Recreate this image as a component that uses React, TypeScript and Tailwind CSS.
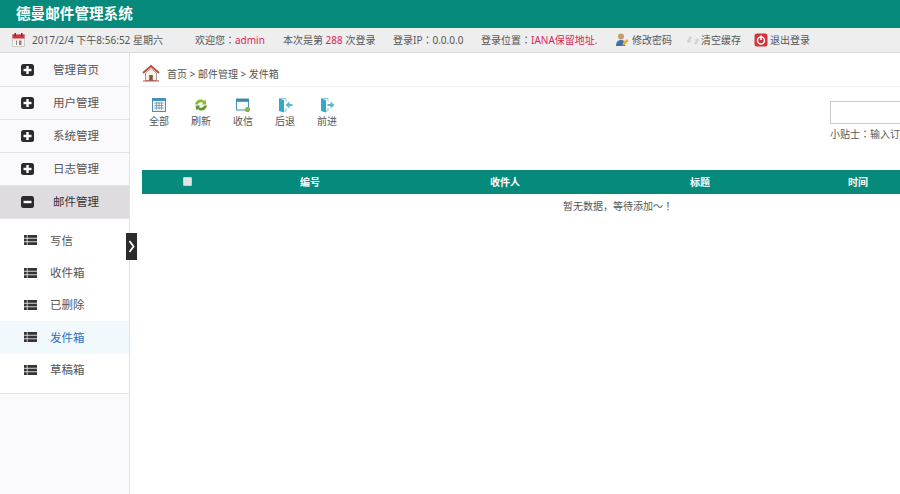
const FONT = "font-['Noto_Sans','Noto_Sans_CJK_SC',sans-serif]";
const CENTERED = "font-['Noto_Sans_CJK_TC',sans-serif]";

const MENU = [
  { label: "管理首页", open: false },
  { label: "用户管理", open: false },
  { label: "系统管理", open: false },
  { label: "日志管理", open: false },
  { label: "邮件管理", open: true },
];

const SUB_MENU = ["写信", "收件箱", "已删除", "发件箱", "草稿箱"];

const COLUMNS = ["编号", "收件人", "标题", "时间"];

// full-width colon sits mid-cell in the reference, TC glyph does that
function Colon() {
  return <span className={CENTERED}>：</span>;
}

function CalendarIcon() {
  return (
    <svg width="13" height="14" viewBox="0 0 13 14" className="shrink-0">
      <rect x="0.5" y="1.5" width="12" height="12" fill="#f4f1ee" stroke="#b9b4b0" strokeWidth="0.6" />
      <rect x="0.5" y="1.5" width="12" height="4" fill="#d2333f" />
      <rect x="2.5" y="0" width="1.5" height="3" fill="#7a2530" />
      <rect x="9" y="0" width="1.5" height="3" fill="#7a2530" />
      <rect x="4" y="7.5" width="1" height="4.5" fill="#8b8682" />
      <rect x="7" y="7.5" width="2.5" height="4.5" fill="#8b8682" />
    </svg>
  );
}

function UserIcon() {
  return (
    <svg width="14" height="14" viewBox="0 0 14 14" className="shrink-0">
      <circle cx="6" cy="3.5" r="3" fill="#c99a6a" />
      <path d="M1 13c0-4 2-6 5-6s4 1.5 4 3v3z" fill="#3f6fb0" />
      <path d="M8 9l4-3 1.5 2-4 4-2 .5z" fill="#e8b030" />
    </svg>
  );
}

function GrayRefreshIcon() {
  return (
    <svg width="14" height="13" viewBox="0 0 14 13" className="shrink-0">
      <path d="M1 7l3-5 2 1.5-2 3 1.5 1L1.5 9z" fill="#d2d2d2" />
      <path d="M13 6l-3 5-2-1.5 2-3-1.5-1L12.5 4z" fill="#d2d2d2" />
    </svg>
  );
}

function PowerIcon() {
  return (
    <svg width="14" height="14" viewBox="0 0 14 14" className="shrink-0">
      <rect x="0.5" y="0.5" width="13" height="13" rx="2.5" fill="#d5333a" />
      <circle cx="7" cy="7.5" r="3.5" fill="none" stroke="#fff" strokeWidth="1.5" />
      <rect x="6.2" y="2.5" width="1.6" height="4.5" fill="#fff" />
    </svg>
  );
}

function ToggleIcon({ open }: { open: boolean }) {
  return (
    <svg width="13" height="12" viewBox="0 0 13 12" className="shrink-0">
      <rect width="13" height="12" rx="2.5" fill="#2b2b2b" />
      <rect x="2.5" y="4.8" width="8" height="2.4" fill="#fff" />
      {!open && <rect x="5.3" y="2" width="2.4" height="8" fill="#fff" />}
    </svg>
  );
}

function ListIcon() {
  return (
    <svg width="13" height="10" viewBox="0 0 13 10" className="shrink-0">
      <rect x="0" y="0" width="2.8" height="2.8" fill="#333" />
      <rect x="3.5" y="0" width="9.5" height="2.8" fill="#333" />
      <rect x="0" y="3.6" width="2.8" height="2.8" fill="#333" />
      <rect x="3.5" y="3.6" width="9.5" height="2.8" fill="#333" />
      <rect x="0" y="7.2" width="2.8" height="2.8" fill="#333" />
      <rect x="3.5" y="7.2" width="9.5" height="2.8" fill="#333" />
    </svg>
  );
}

function HomeIcon() {
  return (
    <svg width="18" height="18" viewBox="0 0 18 18" className="shrink-0">
      <path d="M1 9L9 2l8 7" fill="none" stroke="#c0473a" strokeWidth="1.8" />
      <path d="M3.5 9v7.5h11V9L9 4.5z" fill="#f7f1e6" stroke="#8d8a80" strokeWidth="0.8" />
      <rect x="7.2" y="11" width="3.6" height="5.5" fill="#7d5a4a" />
      <rect x="1" y="16.5" width="16" height="1" fill="#c0473a" />
    </svg>
  );
}

function GridIcon() {
  return (
    <svg width="14" height="14" viewBox="0 0 14 14">
      <rect x="0.5" y="0.5" width="13" height="13" fill="#eef5fa" stroke="#4a8fb5" />
      <rect x="0.5" y="0.5" width="13" height="2.5" fill="#4a8fb5" />
      <path d="M2.5 5h9M2.5 7.5h9M2.5 10h9M4.5 4v7.5M7 4v7.5M9.5 4v7.5" stroke="#7d98ad" strokeWidth="0.9" />
    </svg>
  );
}

function GreenRefreshIcon() {
  return (
    <svg width="14" height="14" viewBox="0 0 14 14">
      <path d="M1 6.5C1.5 3 4.5 1 7.5 1.5c1 .2 2 .7 2.500 1.500L11.500 1.500l1 5H7.500L9.200 5C8 3.800 5 3.800 3.800 6.500z" fill="#8ab83a" />
      <path d="M13 7.500C12.500 11 9.500 13 6.500 12.500c-1-.2-2-.7-2.500-1.500L2.500 12.500l-1-5h5L4.800 9C6 10.200 9 10.200 10.200 7.500z" fill="#5f9a28" />
    </svg>
  );
}

function InboxIcon() {
  return (
    <svg width="15" height="15" viewBox="0 0 15 15">
      <rect x="0.5" y="1" width="12" height="11" fill="#fafcfd" stroke="#4a8fb5" />
      <rect x="0.5" y="1" width="12" height="2.8" fill="#3f86b0" />
      <circle cx="11.5" cy="11.5" r="2.6" fill="#86b83a" />
    </svg>
  );
}

function DoorIcon({ flip }: { flip: boolean }) {
  return (
    <svg width="15" height="15" viewBox="0 0 15 15">
      <path d="M1 0.5l5 1.5v12.5l-5-1.5z" fill="#35a8c8" />
      <path d="M1 0.5h7v3M8 10v3H6" fill="none" stroke="#8cc8da" />
      {flip ? (
        <path d="M7.5 6h3V3.5L14.5 7l-4 3.5V8h-3z" fill="#5cb8d2" />
      ) : (
        <path d="M14.5 6h-3V3.5L7.5 7l4 3.5V8h3z" fill="#5cb8d2" />
      )}
    </svg>
  );
}

const TOOLS = [
  { label: "全部", icon: <GridIcon /> },
  { label: "刷新", icon: <GreenRefreshIcon /> },
  { label: "收信", icon: <InboxIcon /> },
  { label: "后退", icon: <DoorIcon flip={false} /> },
  { label: "前进", icon: <DoorIcon flip={true} /> },
];

export default function App() {
  return (
    <div className={`${FONT} flex h-[494px] w-[900px] flex-col overflow-hidden bg-white text-[10px] text-[#555]`}>
      {/* Header */}
      <header className="flex h-[28px] shrink-0 items-center bg-[#058a7b] pl-4 text-[14.6px] font-bold text-white">
        德曼邮件管理系统
      </header>

      {/* Info bar */}
      <div className="flex h-[25px] shrink-0 items-center whitespace-nowrap border-b border-[#dcdcdc] bg-[#efeeef] pl-3">
        <CalendarIcon />
        <span className="ml-[7px] w-[130px]">2017/2/4 下午8:56:52 星期六</span>
        <span className="ml-[33px] w-[88px]">
          欢迎您<Colon /><span className="text-[#d81e5b]">admin</span>
        </span>
        <span className="w-[110px]">
          本次是第 <span className="text-[#d81e5b]">288</span> 次登录
        </span>
        <span className="w-[88px]">登录IP<Colon />0.0.0.0</span>
        <span className="w-[134px]">
          登录位置<Colon /><span className="text-[#d81e5b]">IANA保留地址.</span>
        </span>
        <span className="flex w-[71px] items-center gap-[3px]">
          <UserIcon />
          修改密码
        </span>
        <span className="flex w-[68px] items-center gap-[1px]">
          <GrayRefreshIcon />
          清空缓存
        </span>
        <span className="flex items-center gap-[2px]">
          <PowerIcon />
          退出登录
        </span>
      </div>

      <div className="flex min-h-0 flex-1">
        {/* Sidebar */}
        <aside className="relative w-[130px] shrink-0 border-r border-[#e4e2e6] bg-[#faf9fb] pt-px text-[11.5px]">
          {MENU.map((item) => (
            <div
              key={item.label}
              className={`flex h-[33px] items-center gap-[19px] border-b border-[#e4e2e6] pl-[21px] ${item.open ? "bg-[#dedcdf] text-[#333]" : ""}`}
            >
              <ToggleIcon open={item.open} />
              {item.label}
            </div>
          ))}
          <div className="border-b border-[#e4e2e6] bg-white pb-[7px] pt-[5px]">
            {SUB_MENU.map((name) => (
              <div
                key={name}
                className={`flex h-[32.4px] items-center gap-[13px] pl-[24px] ${name === "发件箱" ? "bg-[#f2f9fd] text-[#2d6fc4]" : ""}`}
              >
                <ListIcon />
                {name}
              </div>
            ))}
          </div>
          <div className="absolute left-[126px] top-[180px] flex h-[27px] w-[11px] items-center justify-center bg-[#2b2b2b]">
            <svg width="7" height="13" viewBox="0 0 7 13">
              <path d="M1.5 1L5.5 6.5 1.5 12" fill="none" stroke="#fff" strokeWidth="1.8" />
            </svg>
          </div>
        </aside>

        {/* Main */}
        <main className="min-w-0 flex-1 overflow-hidden">
          <div className="ml-[12px] flex h-[34px] items-center gap-[7px] border-b border-[#eeeeee] pt-[6px]">
            <HomeIcon />
            <span className="pt-[3px]">首页 &gt; 邮件管理 &gt; 发件箱</span>
          </div>

          <div className="ml-[12px] flex h-[83px] items-start justify-between">
            <div className="-ml-[4px] flex pt-[10px]">
              {TOOLS.map((tool) => (
                <div key={tool.label} className="flex w-[42px] flex-col items-center">
                  <div className="flex h-[16px] items-center">{tool.icon}</div>
                  <span className="mt-[1px] leading-[14px]">{tool.label}</span>
                </div>
              ))}
            </div>
            <div className="w-[70px] shrink-0 whitespace-nowrap pt-[14px]">
              <div className="h-[23px] w-[90px] border border-[#cccccc] bg-white" />
              <div className="mt-[2px]">小贴士<Colon />输入订单号</div>
            </div>
          </div>

          <div className="ml-[12px] w-[952px]">
            <div className="grid h-[24px] grid-cols-[90px_156px_234px_156px_316px] items-center bg-[#058a7b] text-center font-bold text-white">
              <div className="flex justify-center pb-[2px]">
                <span className="h-[9px] w-[9px] rounded-[1px] border border-[#cfcfcf] bg-[#e4e4e4]" />
              </div>
              {COLUMNS.map((col, i) => (
                <div key={col} className={i === 3 ? "pr-[156px]" : ""}>
                  {col}
                </div>
              ))}
            </div>
            <div className="h-[24px] text-center leading-[24px]">
              暂无数据，等待添加～<span className={CENTERED}>！</span>
            </div>
          </div>
        </main>
      </div>
    </div>
  );
}
